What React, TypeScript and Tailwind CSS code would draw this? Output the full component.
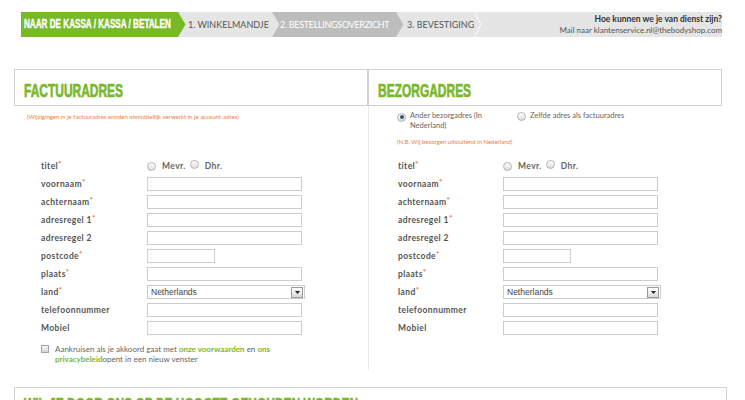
import React from 'react';

const GREEN = 'text-[#7ab82b]';
const ORANGE = 'text-[#f07c3e]';

function Arrow({ from, to }: { from: string; to: string }) {
  return (
    <svg width="8" height="25" viewBox="0 0 8 25" className="shrink-0">
      <rect width="8" height="25" fill={to} />
      <polygon points="0,0 7.5,12.5 0,25" fill={from} />
    </svg>
  );
}

function Chevron() {
  return (
    <svg width="8" height="25" viewBox="0 0 8 25" className="shrink-0">
      <rect width="8" height="25" fill="#e5e5e5" />
      <polyline points="0.5,0 7,12.5 0.5,25" fill="none" stroke="#f7f7f7" strokeWidth="1.2" />
    </svg>
  );
}

function Radio({ checked = false }: { checked?: boolean }) {
  return (
    <span className="inline-flex h-[9px] w-[9px] shrink-0 items-center justify-center rounded-full border border-[#b3b3b3] bg-linear-to-b from-white to-[#dcdcdc]">
      {checked && <span className="h-[4px] w-[4px] rounded-full bg-[#2f5577]" />}
    </span>
  );
}

function Row({ label, req, children, lw }: { label: string; req?: boolean; children: React.ReactNode; lw: string }) {
  return (
    <div className="flex h-[18px] items-center">
      <div className={`${lw} text-[8.5px] font-bold tracking-[0.4px] text-[#555]`}>
        {label}
        {req && <span className={`${ORANGE} relative top-[-2px] text-[8px] font-black`}>*</span>}
      </div>
      {children}
    </div>
  );
}

function Input({ short }: { short?: boolean }) {
  return (
    <input
      readOnly
      className={`h-[14px] ${short ? 'w-[68px]' : 'w-[155px]'} border border-[#cdcdcd] bg-white outline-none`}
    />
  );
}

function Select() {
  return (
    <div className="flex h-[14px] w-[158px] items-center justify-between border border-[#cdcdcd] bg-white pl-[3px] pr-[1px]">
      <span className="font-['Liberation_Sans',sans-serif] text-[8.5px] text-[#444]">Netherlands</span>
      <span className="flex h-[11px] w-[12px] items-center justify-center border border-[#9a9a9a] bg-linear-to-b from-white to-[#d9d9d9]">
        <svg width="5" height="3" viewBox="0 0 5 3">
          <polygon points="0,0 5,0 2.5,3" fill="#222" />
        </svg>
      </span>
    </div>
  );
}

function Fields({ lw }: { lw: string }) {
  return (
    <div>
      <Row label="titel" req lw={lw}>
        <div className="flex items-center text-[8.5px] font-bold tracking-[0.4px] text-[#666]">
          <Radio />
          <span className="ml-[6px]">Mevr.</span>
          <span className="ml-[4px]"><Radio /></span>
          <span className="ml-[6px]">Dhr.</span>
        </div>
      </Row>
      <Row label="voornaam" req lw={lw}><Input /></Row>
      <Row label="achternaam" req lw={lw}><Input /></Row>
      <Row label="adresregel 1" req lw={lw}><Input /></Row>
      <Row label="adresregel 2" lw={lw}><Input /></Row>
      <Row label="postcode" req lw={lw}><Input short /></Row>
      <Row label="plaats" req lw={lw}><Input /></Row>
      <Row label="land" req lw={lw}><Select /></Row>
      <Row label="telefoonnummer" lw={lw}><Input /></Row>
      <Row label="Mobiel" lw={lw}><Input /></Row>
    </div>
  );
}

function Heading({ children }: { children: React.ReactNode }) {
  return (
    <div className="h-[37px] border border-[#d2d2d2] bg-white pl-[9px] pt-[9px]">
      <span
        className={`inline-block origin-left scale-x-[0.63] whitespace-nowrap font-['Liberation_Sans',sans-serif] text-[19px] leading-[19px] font-bold [-webkit-text-stroke:0.7px_#7ab82b] ${GREEN}`}
      >
        {children}
      </span>
    </div>
  );
}

export default function App() {
  return (
    <div className="min-h-screen w-[745px] overflow-hidden bg-white font-['Lato',sans-serif] text-[#555]">
      {/* Steps bar */}
      <div className="ml-[21px] mt-[12px] flex h-[25px] w-[701px] items-center whitespace-nowrap bg-[#e5e5e5]">
        <div className="flex h-full w-[157px] items-center bg-[#78b928] pl-[3px]">
          <span className="inline-block origin-left scale-x-[0.65] font-['Liberation_Sans',sans-serif] text-[12.5px] font-bold text-white [-webkit-text-stroke:0.4px_#fff]">
            NAAR DE KASSA / KASSA / BETALEN
          </span>
        </div>
        <Arrow from="#78b928" to="#e5e5e5" />
        <div className="flex h-full w-[86px] items-center pl-[2px] text-[9px] text-[#555]">1. WINKELMANDJE</div>
        <Arrow from="#e5e5e5" to="#bdbdbd" />
        <div className="flex h-full w-[116px] items-center bg-[#bdbdbd] text-[9px] tracking-[-0.3px] text-white">2. BESTELLINGSOVERZICHT</div>
        <Arrow from="#bdbdbd" to="#e5e5e5" />
        <div className="flex h-full w-[70px] items-center pl-[3px] text-[9px] text-[#555]">3. BEVESTIGING</div>
        <Chevron />
        <div className="flex flex-1 flex-col items-end leading-[11px]">
          <span className="text-[8.5px] font-bold text-[#333]">Hoe kunnen we je van dienst zijn?</span>
          <span className="text-[8px] text-[#555]">Mail naar klantenservice.nl@thebodyshop.com</span>
        </div>
      </div>

      {/* Address columns */}
      <div className="ml-[14px] mt-[32px] grid w-[708px] grid-cols-[354px_354px]">
        <div>
          <Heading>FACTUURADRES</Heading>
          <div className="pl-[13px] pt-[6px]">
            <p className={`${ORANGE} text-[6px] leading-[10px]`}>
              (Wijzigingen in je factuuradres worden onmiddellijk verwerkt in je account-adres)
            </p>
          </div>
          <div className="mt-[35px] pl-[27px]">
            <Fields lw="w-[106px]" />
            <div className="mt-[7px] flex items-start">
              <span className="mt-[1px] h-[8px] w-[8px] shrink-0 border border-[#a3a3a3] bg-linear-to-b from-[#f4f4f4] to-[#d5d5d5]" />
              <p className="ml-[6px] text-[8px] leading-[10px] text-[#666]">
                Aankruisen als je akkoord gaat met <b className={GREEN}>onze voorwaarden</b> en <b className={GREEN}>ons</b>
                <br />
                <b className={GREEN}>privacybeleid</b>opent in een nieuw venster
              </p>
            </div>
          </div>
        </div>

        <div>
          <Heading>BEZORGADRES</Heading>
          <div className="h-[264px] border-l border-[#ebebeb] pl-[28px] pt-[5px]">
            <div className="flex text-[7.5px] leading-[10px] text-[#666]">
              <div className="flex w-[120px] items-start">
                <span className="mt-[1px]"><Radio checked /></span>
                <span className="ml-[4px]">
                  Ander bezorgadres (In
                  <br />
                  Nederland)
                </span>
              </div>
              <div className="flex items-start">
                <span className="mt-[1px]"><Radio /></span>
                <span className="ml-[4px]">Zelfde adres als factuuradres</span>
              </div>
            </div>
            <p className={`${ORANGE} mt-[6px] text-[6px] leading-[10px]`}>(N.B. Wij bezorgen uitsluitend in Nederland)</p>
            <div className="mt-[10px] pl-[1px]">
              <Fields lw="w-[105px]" />
            </div>
          </div>
        </div>
      </div>

      {/* Newsletter box */}
      <div className="ml-[14px] mt-[17px] h-[60px] w-[713px] border border-[#d2d2d2] pl-[9px] pt-[5px]">
        <span
          className={`inline-block origin-left scale-x-[0.63] whitespace-nowrap font-['Liberation_Sans',sans-serif] text-[19px] leading-[19px] font-bold [-webkit-text-stroke:0.7px_#7ab82b] ${GREEN}`}
        >
          WIL JE DOOR ONS OP DE HOOGTE GEHOUDEN WORDEN
        </span>
      </div>
    </div>
  );
}
